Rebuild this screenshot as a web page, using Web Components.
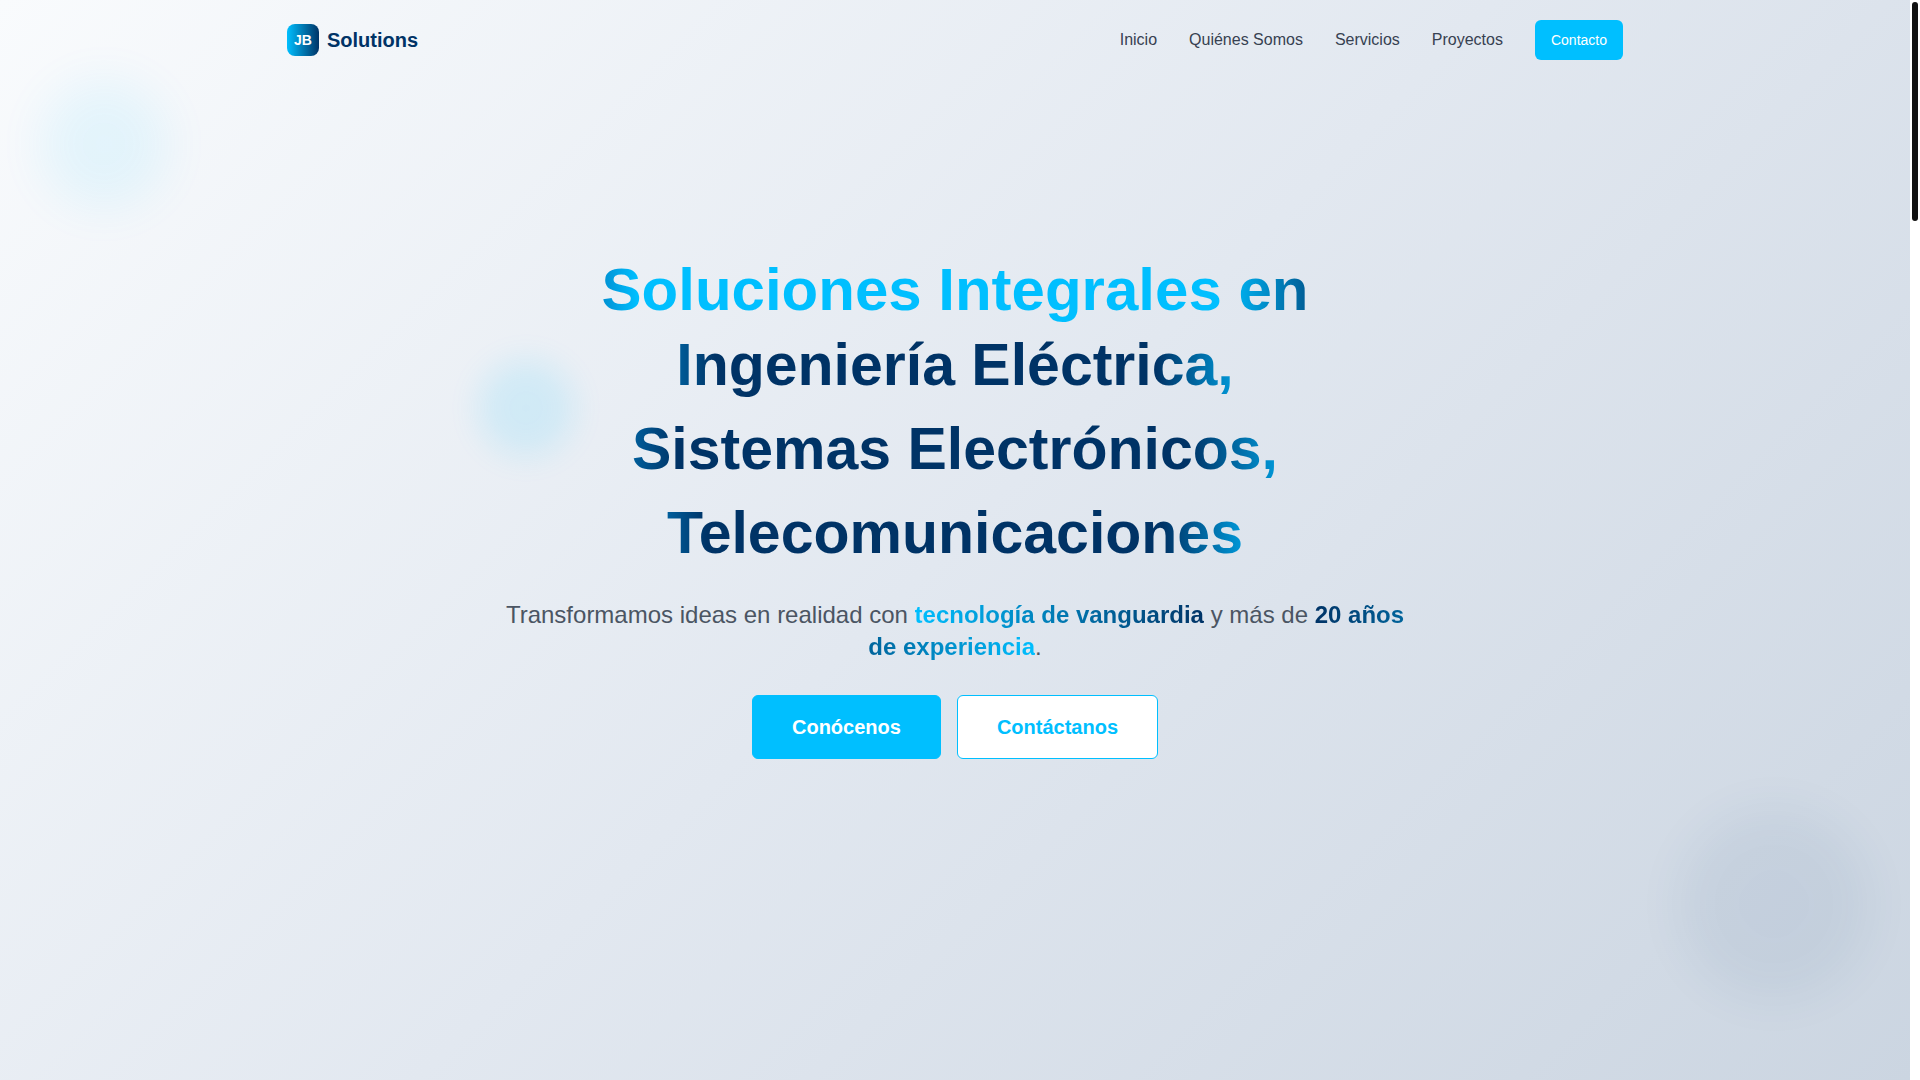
<!DOCTYPE html>
<html lang="es">
<head>
<meta charset="utf-8">
<title>JB Solutions</title>
<style>
html, body { margin: 0; height: 100%; overflow: hidden; }
body { font-family: "Liberation Sans", Arial, sans-serif; background: #fff; color: #374151; }
</style>
</head>
<body>
<jb-page>
  <jb-header slot="header"></jb-header>
  <jb-hero></jb-hero>
</jb-page>
<script>
const define = (name, html) => customElements.define(name, class extends HTMLElement {
  constructor() {
    super();
    this.attachShadow({ mode: "open" }).innerHTML = html;
  }
});

define("jb-glow", `
<style>
:host { display: block; position: absolute; border-radius: 50%; pointer-events: none; }
</style>`);

define("jb-scrollbar", `
<style>
:host { display: block; flex: none; width: 10px; padding: 2px; box-sizing: border-box; background: #fff; }
div { height: 219px; width: 6px; border-radius: 3px; background: #111; }
</style>
<div></div>`);

define("jb-page", `
<style>
:host { display: flex; height: 100vh; }
main { flex: 1; position: relative; overflow: hidden; display: flex; flex-direction: column;
  background: linear-gradient(135deg, #f9fbfd 0%, #e2e8f0 50%, #cbd5e1 100%); }
slot { display: contents; }
.a { left: 40px; top: 80px; width: 128px; height: 128px; background: #00bfff; opacity: .07; filter: blur(24px); }
.b { right: 40px; bottom: 80px; width: 192px; height: 192px; background: #003366; opacity: .05; filter: blur(24px); }
.c { left: 25%; top: 33.33%; width: 96px; height: 96px; background: #00bfff; opacity: .11; filter: blur(16px); }
</style>
<main>
  <jb-glow class="a"></jb-glow><jb-glow class="b"></jb-glow><jb-glow class="c"></jb-glow>
  <slot name="header"></slot>
  <slot></slot>
</main>
<jb-scrollbar></jb-scrollbar>`);

define("jb-logo", `
<style>
:host { display: block; }
a { display: flex; align-items: center; gap: 8px; text-decoration: none; color: #003366; font-size: 20px; line-height: 28px; font-weight: 700; }
.mark { display: flex; align-items: center; justify-content: center; width: 32px; height: 32px; border-radius: 8px;
  background: linear-gradient(90deg, #00bfff, #003366); color: #fff; font-size: 14px; line-height: 20px; }
</style>
<a href="#inicio"><span class="mark">JB</span><span>Solutions</span></a>`);

define("jb-header", `
<style>
:host { display: block; position: relative; }
header { max-width: 1400px; height: 80px; margin: 0 auto; padding: 0 32px; box-sizing: border-box;
  display: flex; align-items: center; justify-content: space-between; }
nav { display: flex; align-items: center; gap: 32px; }
nav a { color: #374151; text-decoration: none; font-size: 16px; line-height: 24px; }
button { font: inherit; font-size: 14px; line-height: 20px; height: 40px; padding: 0 16px; border: 0; border-radius: 6px; background: #00bfff; color: #fff; }
</style>
<header>
  <jb-logo></jb-logo>
  <nav><a href="#inicio">Inicio</a><a href="#quienes">Quiénes Somos</a><a href="#servicios">Servicios</a><a href="#proyectos">Proyectos</a><button>Contacto</button></nav>
</header>`);

define("jb-button", `
<style>
:host { display: block; }
button { font: inherit; font-weight: 700; font-size: 20px; line-height: 28px; height: 64px; padding: 0 39px; border-radius: 6px; border: 1px solid #00bfff; background: #00bfff; color: #fff; }
:host([outline]) button { background: #fff; color: #00bfff; }
</style>
<button><slot></slot></button>`);

define("jb-hero", `
<style>
:host { flex: 1; position: relative; display: flex; flex-direction: column; align-items: center; justify-content: center; text-align: center; padding-bottom: 144px; }
h1 { margin: 0; font-size: 60px; line-height: 66px; font-weight: 700; color: transparent; }
h1 span { display: block; width: fit-content; margin: 0 auto; -webkit-background-clip: text; background-clip: text; color: transparent; }
.top { background-image: linear-gradient(90deg, #0090d2, #00bfff 5%, #00bfff 88%, #005c94); }
.rest { font-size: 59px; line-height: 84px; background-image: linear-gradient(90deg, #005f9c, #003366 7%, #003366 86%, #0098d8); }
p { margin: 24px 0 0; max-width: 912px; font-size: 24px; line-height: 32px; color: #4b5563; }
strong { color: transparent; -webkit-background-clip: text; background-clip: text; background-image: linear-gradient(90deg, #00bfff, #003366); }
strong.r { background-image: linear-gradient(90deg, #003366, #00bfff); }
.actions { display: flex; gap: 16px; margin-top: 32px; }
</style>
<h1><span class="top">Soluciones Integrales en</span><span class="rest">Ingeniería Eléctrica,</span><span class="rest">Sistemas Electrónicos,</span><span class="rest">Telecomunicaciones</span></h1>
<p>Transformamos ideas en realidad con <strong>tecnología de vanguardia</strong> y más de <strong class="r">20 años de experiencia</strong>.</p>
<div class="actions"><jb-button>Conócenos</jb-button><jb-button outline>Contáctanos</jb-button></div>`);
</script>
</body>
</html>
